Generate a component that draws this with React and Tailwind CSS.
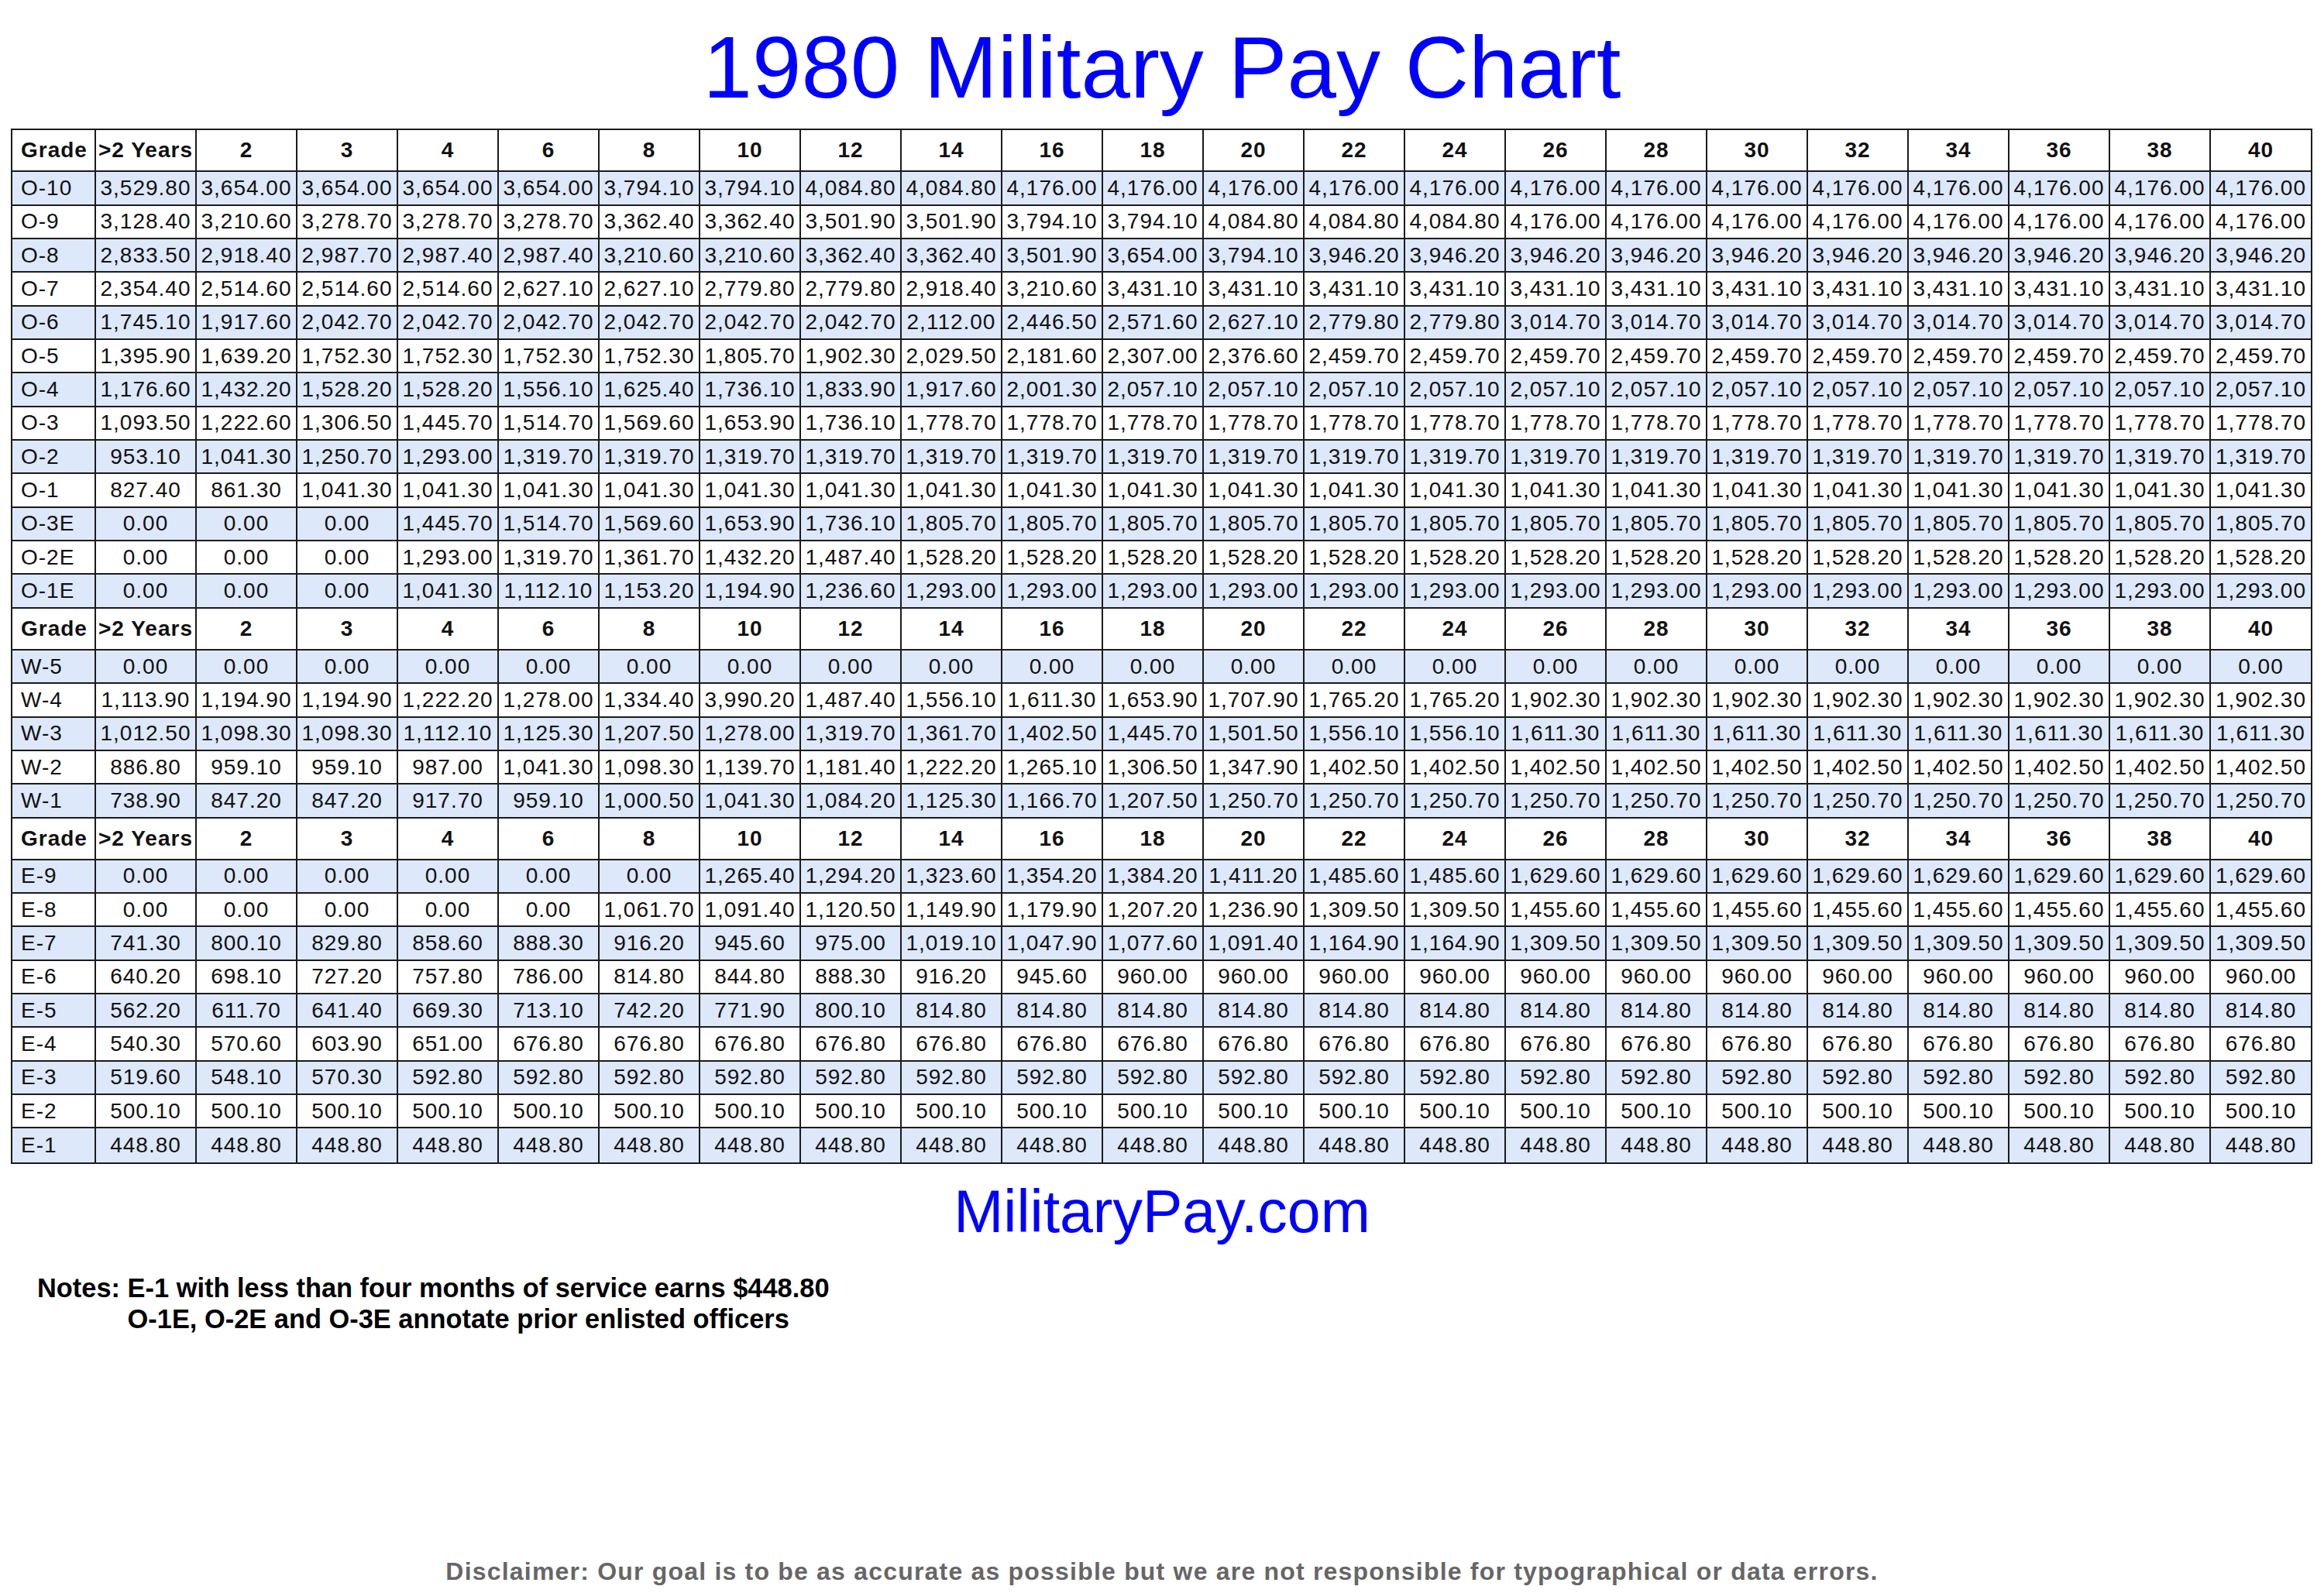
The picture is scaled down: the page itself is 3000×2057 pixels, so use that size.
import React from "react";

const YEARS = [">2 Years", "2", "3", "4", "6", "8", "10", "12", "14", "16", "18", "20", "22", "24", "26", "28", "30", "32", "34", "36", "38", "40"];

const rep = (v, n) => Array(n).fill(v);

const officers = [
  ["O-10", ["3,529.80", "3,654.00", "3,654.00", "3,654.00", "3,654.00", "3,794.10", "3,794.10", "4,084.80", "4,084.80", ...rep("4,176.00", 13)]],
  ["O-9", ["3,128.40", "3,210.60", "3,278.70", "3,278.70", "3,278.70", "3,362.40", "3,362.40", "3,501.90", "3,501.90", "3,794.10", "3,794.10", "4,084.80", "4,084.80", "4,084.80", ...rep("4,176.00", 8)]],
  ["O-8", ["2,833.50", "2,918.40", "2,987.70", "2,987.40", "2,987.40", "3,210.60", "3,210.60", "3,362.40", "3,362.40", "3,501.90", "3,654.00", "3,794.10", ...rep("3,946.20", 10)]],
  ["O-7", ["2,354.40", "2,514.60", "2,514.60", "2,514.60", "2,627.10", "2,627.10", "2,779.80", "2,779.80", "2,918.40", "3,210.60", ...rep("3,431.10", 12)]],
  ["O-6", ["1,745.10", "1,917.60", "2,042.70", "2,042.70", "2,042.70", "2,042.70", "2,042.70", "2,042.70", "2,112.00", "2,446.50", "2,571.60", "2,627.10", "2,779.80", "2,779.80", ...rep("3,014.70", 8)]],
  ["O-5", ["1,395.90", "1,639.20", "1,752.30", "1,752.30", "1,752.30", "1,752.30", "1,805.70", "1,902.30", "2,029.50", "2,181.60", "2,307.00", "2,376.60", ...rep("2,459.70", 10)]],
  ["O-4", ["1,176.60", "1,432.20", "1,528.20", "1,528.20", "1,556.10", "1,625.40", "1,736.10", "1,833.90", "1,917.60", "2,001.30", ...rep("2,057.10", 12)]],
  ["O-3", ["1,093.50", "1,222.60", "1,306.50", "1,445.70", "1,514.70", "1,569.60", "1,653.90", "1,736.10", ...rep("1,778.70", 14)]],
  ["O-2", ["953.10", "1,041.30", "1,250.70", "1,293.00", ...rep("1,319.70", 18)]],
  ["O-1", ["827.40", "861.30", ...rep("1,041.30", 20)]],
  ["O-3E", ["0.00", "0.00", "0.00", "1,445.70", "1,514.70", "1,569.60", "1,653.90", "1,736.10", ...rep("1,805.70", 14)]],
  ["O-2E", ["0.00", "0.00", "0.00", "1,293.00", "1,319.70", "1,361.70", "1,432.20", "1,487.40", ...rep("1,528.20", 14)]],
  ["O-1E", ["0.00", "0.00", "0.00", "1,041.30", "1,112.10", "1,153.20", "1,194.90", "1,236.60", ...rep("1,293.00", 14)]],
];

const warrants = [
  ["W-5", rep("0.00", 22)],
  ["W-4", ["1,113.90", "1,194.90", "1,194.90", "1,222.20", "1,278.00", "1,334.40", "3,990.20", "1,487.40", "1,556.10", "1,611.30", "1,653.90", "1,707.90", "1,765.20", "1,765.20", ...rep("1,902.30", 8)]],
  ["W-3", ["1,012.50", "1,098.30", "1,098.30", "1,112.10", "1,125.30", "1,207.50", "1,278.00", "1,319.70", "1,361.70", "1,402.50", "1,445.70", "1,501.50", "1,556.10", "1,556.10", ...rep("1,611.30", 8)]],
  ["W-2", ["886.80", "959.10", "959.10", "987.00", "1,041.30", "1,098.30", "1,139.70", "1,181.40", "1,222.20", "1,265.10", "1,306.50", "1,347.90", ...rep("1,402.50", 10)]],
  ["W-1", ["738.90", "847.20", "847.20", "917.70", "959.10", "1,000.50", "1,041.30", "1,084.20", "1,125.30", "1,166.70", "1,207.50", ...rep("1,250.70", 11)]],
];

const enlisted = [
  ["E-9", [...rep("0.00", 6), "1,265.40", "1,294.20", "1,323.60", "1,354.20", "1,384.20", "1,411.20", "1,485.60", "1,485.60", ...rep("1,629.60", 8)]],
  ["E-8", [...rep("0.00", 5), "1,061.70", "1,091.40", "1,120.50", "1,149.90", "1,179.90", "1,207.20", "1,236.90", "1,309.50", "1,309.50", ...rep("1,455.60", 8)]],
  ["E-7", ["741.30", "800.10", "829.80", "858.60", "888.30", "916.20", "945.60", "975.00", "1,019.10", "1,047.90", "1,077.60", "1,091.40", "1,164.90", "1,164.90", ...rep("1,309.50", 8)]],
  ["E-6", ["640.20", "698.10", "727.20", "757.80", "786.00", "814.80", "844.80", "888.30", "916.20", "945.60", ...rep("960.00", 12)]],
  ["E-5", ["562.20", "611.70", "641.40", "669.30", "713.10", "742.20", "771.90", "800.10", ...rep("814.80", 14)]],
  ["E-4", ["540.30", "570.60", "603.90", "651.00", ...rep("676.80", 18)]],
  ["E-3", ["519.60", "548.10", "570.30", ...rep("592.80", 19)]],
  ["E-2", rep("500.10", 22)],
  ["E-1", rep("448.80", 22)],
];

const Row = ({ grade, cells, header, shaded, last }) => (
  <div
    className={`flex ${header ? "h-[54.3px] font-bold" : "h-[43.33px]"} ${
      last ? "" : "border-b-2 border-[#1b1b1b]"
    } ${shaded ? "bg-[#dde8fb]" : "bg-white"}`}
  >
    <div className="w-[108px] shrink-0 flex items-center pl-[11px] border-r-2 border-[#1b1b1b] whitespace-nowrap">
      {grade}
    </div>
    {cells.map((c, i) =>
      i < cells.length - 1 ? (
        <div
          key={i}
          className="w-[130px] shrink-0 flex items-center justify-center border-r-2 border-[#1b1b1b] whitespace-nowrap"
        >
          {c}
        </div>
      ) : (
        <div key={i} className="flex-1 flex items-center justify-center whitespace-nowrap">
          {c}
        </div>
      )
    )}
  </div>
);

const Section = ({ rows, isLast }) => (
  <>
    <Row grade="Grade" cells={YEARS} header />
    {rows.map(([g, cells], i) => (
      <Row
        key={g}
        grade={g}
        cells={cells}
        shaded={i % 2 === 0}
        last={isLast && i === rows.length - 1}
      />
    ))}
  </>
);

export default function App() {
  return (
    <div className="w-[3000px] h-[2057px] bg-white font-['Liberation_Sans',Arial,sans-serif] text-black">
      {/* title */}
      <h1 className="pt-[30px] text-center text-[114px] leading-none text-[#0000ff]">
        1980 Military Pay Chart
      </h1>

      {/* pay table */}
      <div className="ml-[14px] mt-[22px] w-[2971px] border-2 border-[#1b1b1b] text-[28px] tracking-[1px] text-[#111]">
        <Section rows={officers} />
        <Section rows={warrants} />
        <Section rows={enlisted} isLast />
      </div>

      <div className="mt-[23px] text-center text-[77px] leading-none text-[#0000ff]">
        MilitaryPay.com
      </div>

      {/* notes */}
      <div className="mt-[40px] pl-[48px] flex text-[34.4px] leading-[40px] font-bold">
        <span className="whitespace-pre">Notes: </span>
        <div>
          <div>E-1 with less than four months of service earns $448.80</div>
          <div>O-1E, O-2E and O-3E annotate prior enlisted officers</div>
        </div>
      </div>

      <div className="mt-[290px] text-center text-[32px] tracking-[1.2px] leading-none font-bold text-[#666]">
        Disclaimer: Our goal is to be as accurate as possible but we are not responsible for typographical or data errors.
      </div>
    </div>
  );
}
